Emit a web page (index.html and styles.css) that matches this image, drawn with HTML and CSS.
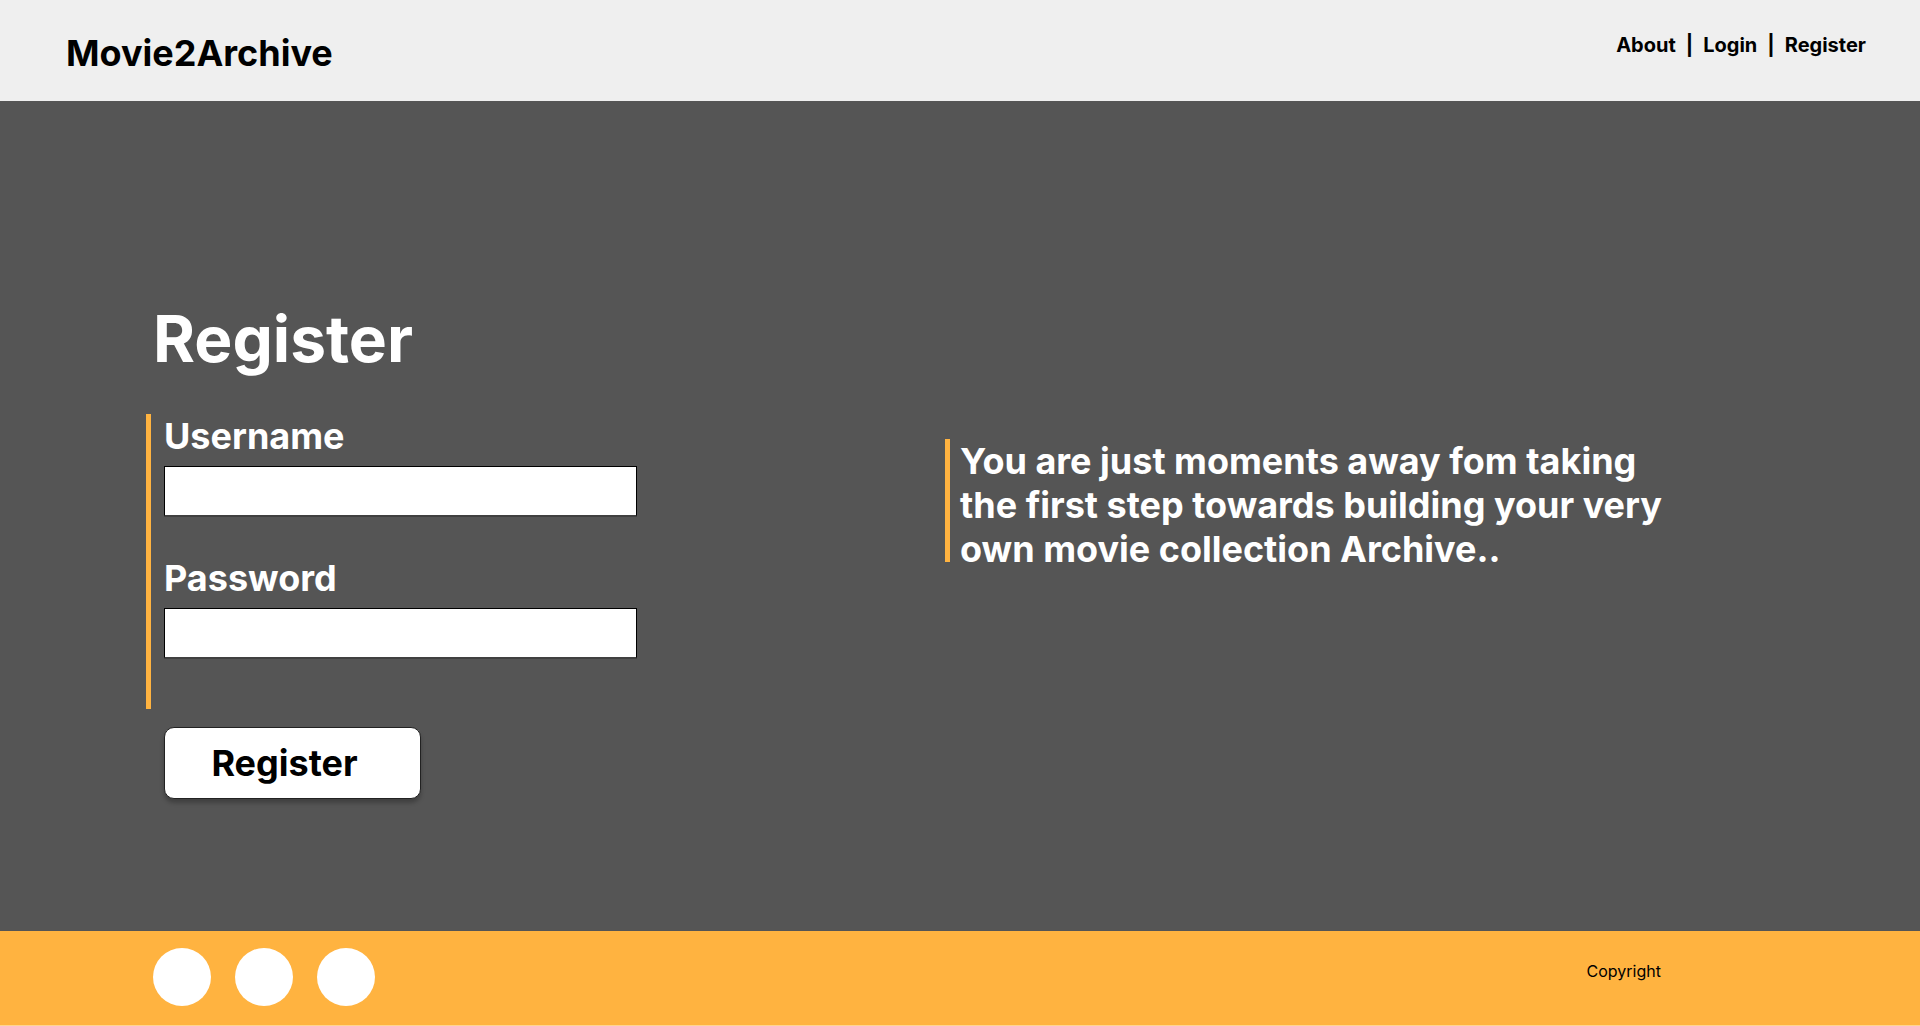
FILE: index.html
```html
<!DOCTYPE html>
<html lang="en">
<head>
<meta charset="utf-8">
<meta name="viewport" content="width=device-width, initial-scale=1">
<title>Movie2Archive - Register</title>
<link rel="stylesheet" href="styles.css">
</head>
<body>
<header class="site-header">
  <a class="brand" href="#">Movie2Archive</a>
  <nav class="site-nav">
    <a href="#">About</a><span>|</span><a href="#">Login</a><span>|</span><a href="#">Register</a>
  </nav>
</header>
<main class="content">
  <section class="register">
    <h1 class="title">Register</h1>
    <form>
      <div class="fields">
        <label class="label" for="username">Username</label>
        <input class="input" id="username" type="text">
        <label class="label" for="password">Password</label>
        <input class="input" id="password" type="password">
      </div>
      <button class="submit" type="submit">Register</button>
    </form>
  </section>
  <section class="pitch">
    <p class="pitch-text">You are just moments away fom taking the first step towards building your very own movie collection Archive..</p>
  </section>
</main>
<footer class="site-footer">
  <div class="social">
    <span class="dot"></span>
    <span class="dot"></span>
    <span class="dot"></span>
  </div>
  <p class="copyright">Copyright</p>
</footer>
</body>
</html>
```

FILE: styles.css
```css
* {
  box-sizing: border-box;
}

body {
  display: flex;
  flex-direction: column;
  min-height: 100vh;
  margin: 0;
  background: #555;
  color: #fff;
  font-family: Inter, "Liberation Sans", sans-serif;
  font-weight: 700;
}

a {
  color: inherit;
  text-decoration: none;
}

.site-header {
  display: flex;
  justify-content: space-between;
  align-items: flex-start;
  padding: 31px 54px 26px 66px;
  background: #efefef;
  color: #000;
}

.brand {
  font-size: 36px;
  line-height: 44px;
}

.site-nav {
  display: flex;
  gap: 10px;
  font-size: 20px;
  line-height: 28px;
}

.content {
  display: grid;
  grid-template-columns: 799fr 829fr;
  flex: 1;
  padding: 199px 146px 132px;
}

.title {
  margin: 0;
  padding: 0 7px;
  font-size: 64px;
  line-height: 78px;
}

.fields {
  display: flex;
  flex-direction: column;
  align-items: flex-start;
  margin-top: 36px;
  padding: 0 0 11px 13px;
  border-left: 5px solid #ffb340;
}

.label {
  font-size: 36px;
  line-height: 44px;
}

.input {
  width: 473px;
  max-width: 100%;
  height: 50px;
  margin: 8px 0 40px;
  padding: 0 12px;
  border: 1px solid #000;
  border-bottom-color: #404040;
  border-radius: 0;
  background: #fff;
  box-shadow: 0 1px 0 #404040;
  font: inherit;
  font-size: 24px;
}

.submit {
  width: 257px;
  height: 72px;
  margin: 18px 0 0 18px;
  padding: 0 16px 0 0;
  border: 1px solid #222;
  border-radius: 10px;
  background: #fff;
  box-shadow: 0 4px 4px rgba(0, 0, 0, 0.25);
  color: #000;
  font: inherit;
  font-size: 36px;
}

.pitch {
  padding-top: 139px;
}

.pitch-text {
  max-width: 730px;
  max-height: 123px;
  margin: 0;
  padding-left: 10px;
  border-left: 5px solid #ffb340;
  font-size: 36px;
  line-height: 44px;
}

.site-footer {
  display: flex;
  justify-content: space-between;
  align-items: flex-start;
  padding: 17px 259px 19px 153px;
  border-bottom: 1px solid #ffd590;
  background: #ffb340;
}

.social {
  display: flex;
  gap: 24px;
}

.dot {
  width: 58px;
  height: 58px;
  border-radius: 50%;
  background: #fff;
}

.copyright {
  margin: 13px 0 0;
  color: #000;
  font-size: 16px;
  font-weight: 400;
  line-height: 20px;
}
```
